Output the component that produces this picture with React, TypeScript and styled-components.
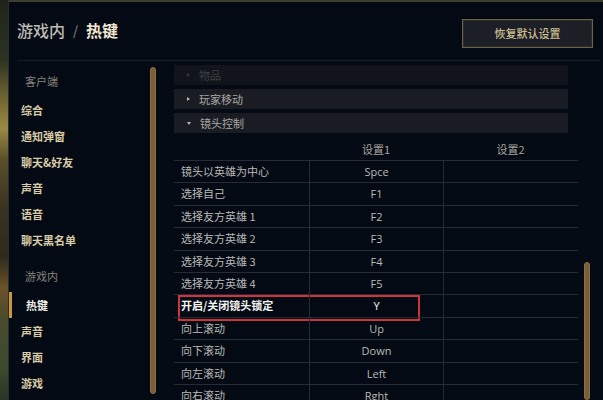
import React from "react";
import styled, { createGlobalStyle } from "styled-components";

const Global = createGlobalStyle`
  html, body { margin: 0; padding: 0; background: #040912; }
  body { font-family: "Noto Sans CJK SC", "Noto Sans", "Liberation Sans", sans-serif; overflow: hidden; }
  * { box-sizing: border-box; }
`;

const Screen = styled.div`
  display: flex;
  width: 603px;
  height: 400px;
  overflow: hidden;
`;

const ArtStrip = styled.div`
  width: 8px;
  flex: none;
  background: linear-gradient(
    180deg,
    #1e2419 0%,
    #2c3323 15%,
    #6c6230 24%,
    #9a8a44 32%,
    #5a4e2c 40%,
    #3a3322 52%,
    #2e2a1e 64%,
    #6a5228 72%,
    #4a4a2e 80%,
    #3c4a30 92%,
    #2a3424 100%
  );
`;

const Panel = styled.div`
  flex: 1;
  display: flex;
  flex-direction: column;
  background: #040a13;
  border-left: 1px solid #2a2d2c;
  border-top: 2px solid #3e3d34;
  min-width: 0;
  overflow: hidden;
`;

const Header = styled.header`
  height: 59px;
  flex: none;
  display: flex;
  align-items: center;
  justify-content: space-between;
  margin: 0 3px 0 8px;
  padding: 0 7px 0 0;
  border-bottom: 1px solid #18202a;
`;

const Title = styled.h1`
  margin: 0;
  font-size: 16px;
  font-weight: 500;
  color: #bdbcb6;
  display: flex;
  align-items: center;
  gap: 8px;
  transform: translateY(-1px);
`;

const Slash = styled.span`
  color: #7c7c78;
  font-size: 13px;
`;

const Current = styled.span`
  color: #f0e6d2;
  font-weight: 700;
`;

const ResetButton = styled.button`
  width: 131px;
  height: 29px;
  background: #1c2026;
  border: 1px solid #6d6246;
  box-shadow: inset 0 0 0 1px #2a2c2c;
  color: #cdbe91;
  font-family: inherit;
  font-size: 11px;
  font-weight: 500;
  transform: translateY(2px);
`;

const Body = styled.div`
  flex: 1;
  display: flex;
  min-height: 0;
`;

const Sidebar = styled.aside`
  width: 147px;
  flex: none;
  display: flex;
`;

const Nav = styled.nav`
  flex: 1;
  padding-top: 7px;
  display: flex;
  flex-direction: column;
`;

const GroupLabel = styled.div<{ $spaced?: boolean }>`
  height: 26px;
  flex: none;
  line-height: 26px;
  padding-left: 16px;
  margin-top: ${(p) => (p.$spaced ? "10px" : "0")};
  margin-bottom: 3px;
  font-size: 11px;
  color: #85837d;
`;

const NavItem = styled.div<{ $active?: boolean }>`
  height: 26px;
  flex: none;
  line-height: 26px;
  border-left: 3px solid ${(p) => (p.$active ? "#c8963c" : "transparent")};
  padding-left: ${(p) => (p.$active ? "14px" : "9px")};
  font-size: 11px;
  font-weight: 700;
  color: ${(p) => (p.$active ? "#f2efe8" : "#d9cba6")};
`;

const ScrollTrack = styled.div<{ $top: number; $bottom: number; $gap?: number }>`
  width: 6px;
  flex: none;
  display: flex;
  flex-direction: column;
  margin-left: ${(p) => p.$gap ?? 0}px;
  padding-top: ${(p) => p.$top}px;
  padding-bottom: ${(p) => p.$bottom}px;
`;

const Thumb = styled.div`
  flex: 1;
  border-radius: 3px;
  background: #7a5e37;
  border: 1px solid #8d7146;
`;

const Content = styled.main`
  flex: 1;
  display: flex;
  padding-left: 18px;
  min-width: 0;
`;

const Main = styled.div`
  width: 404px;
  flex: none;
  padding-top: 4px;
  display: flex;
  flex-direction: column;
  gap: 4px;
`;

const Section = styled.div<{ $faded?: boolean }>`
  height: 20px;
  flex: none;
  width: 394px;
  background: #191d23;
  display: flex;
  align-items: center;
  gap: 9px;
  padding-left: 13px;
  font-size: 11px;
  color: #a9a8a4;
  ${(p) =>
    p.$faded &&
    `
    background: #11151b;
    color: #3e4146;
  `}
`;

const Caret = styled.span<{ $open?: boolean; $dim?: boolean }>`
  width: 0;
  height: 0;
  border-style: solid;
  ${(p) => {
    const c = p.$dim ? "#35383c" : "#b9b8b2";
    return p.$open
      ? `border-width: 3px 2.5px 0 2.5px; border-color: ${c} transparent transparent transparent;`
      : `border-width: 2.5px 0 2.5px 3px; border-color: transparent transparent transparent ${c};`;
  }}
`;

const Table = styled.div`
  flex: none;
  display: grid;
  grid-template-columns: 135px 134px 135px;
  grid-template-rows: 27px;
  grid-auto-rows: 22.4px;
  margin-top: -4px;
`;

const ColHead = styled.div`
  padding-top: 9px;
  line-height: 14px;
  text-align: center;
  font-size: 11px;
  color: #a7a49c;
`;

const Cell = styled.div<{ $first?: boolean; $strong?: boolean; $mark?: boolean }>`
  position: relative;
  line-height: 21px;
  border-top: 1px solid #262c35;
  border-left: ${(p) => (p.$first ? "none" : "1px solid #262c35")};
  padding-left: ${(p) => (p.$first ? "7px" : "0")};
  text-align: ${(p) => (p.$first ? "left" : "center")};
  font-size: 11px;
  white-space: nowrap;
  color: ${(p) => (p.$strong ? "#f4f4f2" : "#b9b9b6")};
  font-weight: ${(p) => (p.$strong && p.$first ? 700 : 400)};
  ${(p) =>
    p.$mark &&
    `
    &::after {
      content: "";
      position: absolute;
      left: 4px;
      top: 0;
      width: 238px;
      height: 22px;
      border: 2px solid #cf333b;
      pointer-events: none;
    }
  `}
`;

const ValueCell = styled(Cell)`
  font-family: "Open Sans", "Noto Sans", sans-serif;
`;

const rows: [string, string][] = [
  ["镜头以英雄为中心", "Spce"],
  ["选择自己", "F1"],
  ["选择友方英雄 1", "F2"],
  ["选择友方英雄 2", "F3"],
  ["选择友方英雄 3", "F4"],
  ["选择友方英雄 4", "F5"],
  ["开启/关闭镜头锁定", "Y"],
  ["向上滚动", "Up"],
  ["向下滚动", "Down"],
  ["向左滚动", "Left"],
  ["向右滚动", "Rght"],
];

const clientItems = ["综合", "通知弹窗", "聊天&好友", "声音", "语音", "聊天黑名单"];
const gameItems = ["热键", "声音", "界面", "游戏"];

export default function App() {
  return (
    <>
      <Global />
      <Screen>
        <ArtStrip />
        <Panel>
          <Header>
            <Title>
              <span>游戏内</span>
              <Slash>/</Slash>
              <Current>热键</Current>
            </Title>
            <ResetButton>恢复默认设置</ResetButton>
          </Header>
          <Body>
            <Sidebar>
              <Nav>
                <GroupLabel>客户端</GroupLabel>
                {clientItems.map((t) => (
                  <NavItem key={t}>{t}</NavItem>
                ))}
                <GroupLabel $spaced>游戏内</GroupLabel>
                {gameItems.map((t, i) => (
                  <NavItem key={t} $active={i === 0}>
                    {t}
                  </NavItem>
                ))}
              </Nav>
              <ScrollTrack $top={6} $bottom={6}>
                <Thumb />
              </ScrollTrack>
            </Sidebar>
            <Content>
              <Main>
                <Section $faded>
                  <Caret $dim />
                  <span>物品</span>
                </Section>
                <Section>
                  <Caret />
                  <span>玩家移动</span>
                </Section>
                <Section>
                  <Caret $open />
                  <span>镜头控制</span>
                </Section>
                <Table>
                  <ColHead />
                  <ColHead>设置1</ColHead>
                  <ColHead>设置2</ColHead>
                  {rows.map(([label, key], i) => {
                    const strong = i === 6;
                    return (
                      <React.Fragment key={label}>
                        <Cell $first $strong={strong} $mark={strong}>
                          {label}
                        </Cell>
                        <ValueCell $strong={strong}>{key}</ValueCell>
                        <Cell />
                      </React.Fragment>
                    );
                  })}
                </Table>
              </Main>
              <ScrollTrack $top={201} $bottom={0} $gap={6}>
                <Thumb />
              </ScrollTrack>
            </Content>
          </Body>
        </Panel>
      </Screen>
    </>
  );
}
